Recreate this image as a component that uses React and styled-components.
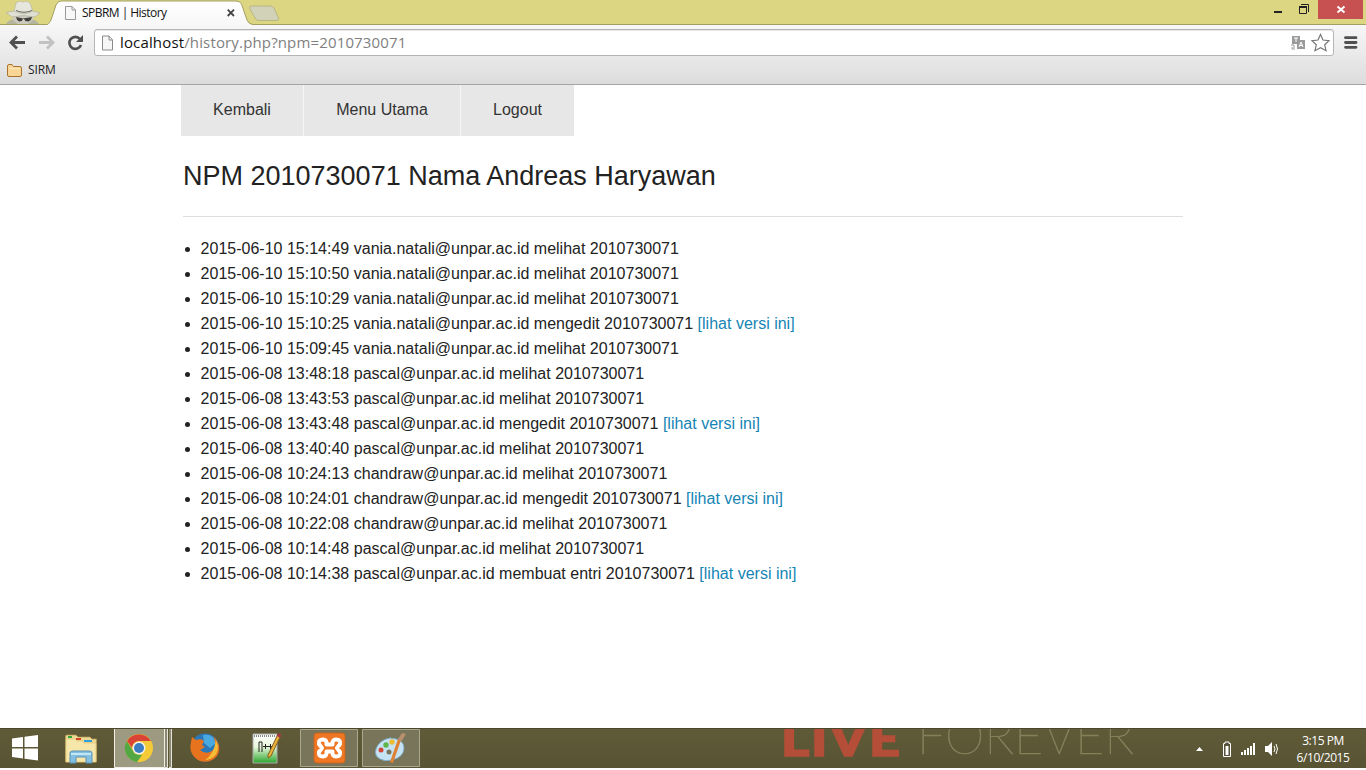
import React from 'react';
import styled, { createGlobalStyle } from 'styled-components';

const Global = createGlobalStyle`
  * { box-sizing: border-box; }
  body { margin: 0; background: #fff; font-family: "Liberation Sans", Arial, sans-serif; overflow: hidden; }
`;
const Screen = styled.div`
  width: 1366px; height: 768px; display: flex; flex-direction: column;
`;
const TitleBar = styled.header`
  height: 25px; background: #dcd683; display: flex; justify-content: space-between;
  border-bottom: 1px solid #a39f62; position: relative;
`;
const TabArt = styled.svg`
  position: absolute; left: 0; top: 0; width: 300px; height: 26px;
`;
const TabLabel = styled.div`
  position: relative; margin-left: 82px; padding-top: 5px; width: 160px;
  font: 12px/16px "Open Sans", sans-serif; color: #111; letter-spacing: -0.54px;
`;
const WindowButtons = styled.div`display: flex; height: 19px;`;
const WindowIcon = styled.svg`width: 126px; height: 24px; display: block;`;
const Toolbar = styled.div`
  height: 59px; background: linear-gradient(#f7f7f7, #dcdcdc);
  border-bottom: 1px solid #a4a4a4; display: flex; flex-direction: column;
  box-sizing: content-box;
`;
const NavRow = styled.div`display: flex; height: 35px; padding-top: 4px;`;
const NavIcons = styled.svg`width: 94px; height: 31px; display: block; flex: none;`;
const AddressBar = styled.div`
  width: 1240px; height: 27px; background: #fff; border: 1px solid #b5b5b5; border-radius: 3px;
  display: flex; align-items: center; box-shadow: inset 0 1px 0 #e8e8e8;
`;
const PageIcon = styled.svg`width: 25px; height: 25px; flex: none;`;
const Url = styled.div`
  flex: 1; font: 15px/24px "Open Sans", sans-serif; color: #808080; letter-spacing: 0.15px; padding-bottom: 2px;
  b { font-weight: 400; color: #111; }
`;
const AddressIcons = styled.svg`width: 46px; height: 25px; flex: none;`;
const MenuIcon = styled.svg`width: 32px; height: 31px; flex: none;`;
const Bookmarks = styled.div`
  display: flex; padding-left: 7px; gap: 6px; height: 21px; align-items: center;
  font: 12px/16px "Open Sans", sans-serif; color: #222;
  svg { width: 15px; height: 13px; }
  span { letter-spacing: -0.1px; padding-bottom: 1px; }
`;
const Page = styled.main`flex: 1; background: #fff; padding-left: 181px;`;
const Menu = styled.nav`display: flex; height: 51px;`;
const MenuItem = styled.a`
  width: ${p => p.$w}px; background: #e7e7e7; color: #333; font-size: 16px; line-height: 50px; text-align: center;
  border-right: ${p => (p.$last ? '0' : '1px solid #f5f5f5')};
`;
const Heading = styled.h3`
  margin: 20px 0 0 2px; font-size: 27px; line-height: 41px; font-weight: 400; color: #222; white-space: nowrap;
`;
const Rule = styled.hr`margin: 19px 0 19px 2px; width: 1000px; border: 0; border-top: 1px solid #ddd;`;
const List = styled.ul`margin: 0; padding: 0 0 0 4px; list-style: none;`;
const Entry = styled.li`
  height: 25px; font-size: 16px; line-height: 25px; color: #222; display: flex; white-space: pre; letter-spacing: 0.006px;
  &::before { content: ""; width: 5px; height: 5px; border-radius: 50%; background: #222; margin: 11px 10.6px 0 0; }
  a { color: #1585b5; }
`;
const Taskbar = styled.footer`
  height: 40px; flex: none; background: linear-gradient(#5f5b38, #585333); border-top: 1px solid #4b472f;
  display: flex; position: relative; overflow: hidden;
`;
const Wallpaper = styled.div`
  position: absolute; left: ${p => p.$x}px; top: ${p => p.$y}px; white-space: nowrap; transform-origin: 0 0;
  transform: scaleX(${p => p.$sx}); font: ${p => p.$w} ${p => p.$s}px/60px Lato, sans-serif; color: ${p => p.$c};
  letter-spacing: ${p => p.$ls}px; -webkit-text-stroke: ${p => p.$stroke}px ${p => p.$c};
`;
const TaskIcons = styled.svg`width: 430px; height: 40px; margin-top: -1px; flex: none;`;
const Tray = styled.svg`width: 100px; height: 40px; margin: -1px 0 0 auto;`;
const Clock = styled.div`
  width: 86px; text-align: center; color: #fff; font: 12px/17px "Open Sans", sans-serif; padding-top: 3px;
  letter-spacing: -0.45px;
`;

const entries = [
  ['2015-06-10 15:14:49 vania.natali@unpar.ac.id melihat 2010730071'],
  ['2015-06-10 15:10:50 vania.natali@unpar.ac.id melihat 2010730071'],
  ['2015-06-10 15:10:29 vania.natali@unpar.ac.id melihat 2010730071'],
  ['2015-06-10 15:10:25 vania.natali@unpar.ac.id mengedit 2010730071 ', 1],
  ['2015-06-10 15:09:45 vania.natali@unpar.ac.id melihat 2010730071'],
  ['2015-06-08 13:48:18 pascal@unpar.ac.id melihat 2010730071'],
  ['2015-06-08 13:43:53 pascal@unpar.ac.id melihat 2010730071'],
  ['2015-06-08 13:43:48 pascal@unpar.ac.id mengedit 2010730071 ', 1],
  ['2015-06-08 13:40:40 pascal@unpar.ac.id melihat 2010730071'],
  ['2015-06-08 10:24:13 chandraw@unpar.ac.id melihat 2010730071'],
  ['2015-06-08 10:24:01 chandraw@unpar.ac.id mengedit 2010730071 ', 1],
  ['2015-06-08 10:22:08 chandraw@unpar.ac.id melihat 2010730071'],
  ['2015-06-08 10:14:48 pascal@unpar.ac.id melihat 2010730071'],
  ['2015-06-08 10:14:38 pascal@unpar.ac.id membuat entri 2010730071 ', 1],
];

export default function App() {
  return (
    <>
      <Global />
      <Screen>
        <TitleBar>
          <TabArt viewBox="0 0 300 26">
            <defs>
              <linearGradient id="tab" x1="0" y1="0" x2="0" y2="1"><stop offset="0" stopColor="#fff" /><stop offset="1" stopColor="#f7f7f7" /></linearGradient>
            </defs>
            <path d="M45 26C49 24 50 22 51 20L56 5Q57.500 1 61 1H236Q240 1 241.500 4L247 20Q249 24.500 253 24.500V26Z" fill="url(#tab)" stroke="#a39f62" />
            <path d="M44 26H254V25H44Z" fill="#f7f7f7" />
            <path d="M251 6H270Q273 6 274 8L278.500 18Q279.500 20.500 276 20.500H259Q256 20.500 255 18L250 9Q248.500 6 251 6Z" fill="#d2d2b8" stroke="#b8b582" />
            <path d="M6 24Q8 20 14 19H31Q37 20 39 24Z" fill="#b5b49f" />
            <path d="M12 14H34L33 20L28 24H18L13 20Z" fill="#cbcabd" />
            <path d="M14 12L16 3Q19 0 23 2Q27 0 30 3L33 12Q24 16 14 12Z" fill="#e6e6dd" stroke="#b5b4a0" strokeWidth=".6" />
            <path d="M16 10.500Q24 14 32 10.500" fill="none" stroke="#66655c" />
            <path d="M6 12.500L14 11Q24 16 33 11L40 13L35 17Q24 14 12 17Z" fill="#e0dfd4" stroke="#a3a28e" strokeWidth=".5" />
            <path d="M16 17L23 18.500L32 17Q31 21 28 21.500Q25 21.500 24 19H23Q22 21.500 19.500 21.500Q17 21 16 17Z" fill="#3f3f3c" />
            <path d="M65.500 6.500H72L75.500 10V19.500H65.500ZM72 6.500V10H75.500" fill="#f8f8f8" stroke="#999" />
            <path d="M227.700 9.700L234 16M234 9.700L227.700 16" stroke="#444" strokeWidth="1.800" />
          </TabArt>
          <TabLabel>SPBRM | History</TabLabel>
          <WindowButtons>
            <WindowIcon viewBox="0 0 126 24">
              <path d="M34 12H42" stroke="#222" strokeWidth="2" />
              <path d="M59.500 6.500H66.500V13.500H59.500ZM61 4.500H68.500V12" fill="none" stroke="#222" />
              <path d="M59 6H67V8H59Z" fill="#222" />
              <path d="M78 0H123V19H78Z" fill="#c75050" />
              <path d="M97.500 6.500L104.500 12.500M104.500 6.500L97.500 12.500" stroke="#fff" strokeWidth="2" />
            </WindowIcon>
          </WindowButtons>
        </TitleBar>
        <Toolbar>
          <NavRow>
            <NavIcons viewBox="0 0 94 31">
              <path d="M25 13.500H11M17 7.500L11 13.500L17 19.500" fill="none" stroke="#505050" strokeWidth="2.800" />
              <path d="M39 13.500H53M47 7.500L53 13.500L47 19.500" fill="none" stroke="#c2c2c2" strokeWidth="2.800" />
              <path d="M80 10A6 6 0 1 0 81 16" fill="none" stroke="#505050" strokeWidth="2.600" />
              <path d="M83 6V13H76Z" fill="#505050" />
            </NavIcons>
            <AddressBar>
              <PageIcon viewBox="0 0 25 25">
                <path d="M7.500 6H14L17.500 10V20H7.500ZM14 6V10H17.500" fill="#f7f7f7" stroke="#8a8a8a" />
              </PageIcon>
              <Url><b>localhost</b>/history.php?npm=2010730071</Url>
              <AddressIcons viewBox="0 0 46 25">
                <path d="M5 6H13V14H5ZM10 10H18V19H10Z" fill="#9a9a9a" />
                <path d="M7 8H11M9 8V12M12 17L14 12L16 17M12.500 15.500H15.500" stroke="#fff" fill="none" />
                <path d="M4 15H7V18M5 17V19H8" stroke="#999" fill="none" />
                <path d="M33.500 4.500L36 10L42 10.700L37.700 14.800L39 20.700L33.500 17.700L28 20.700L29.300 14.800L25 10.700L31 10Z" fill="#fff" stroke="#777" strokeWidth="1.200" />
              </AddressIcons>
            </AddressBar>
            <MenuIcon viewBox="0 0 32 31"><path d="M11.500 8.700H22M11.500 13.500H22M11.500 18.300H22" stroke="#505050" strokeWidth="2.800" strokeLinecap="round" /></MenuIcon>
          </NavRow>
          <Bookmarks>
            <svg viewBox="0 0 15 13"><path d="M.5 2Q.5.5 2 .5H5L6.500 2.500H13Q14.500 2.500 14.500 4V11Q14.500 12.500 13 12.500H2Q.5 12.500.5 11Z" fill="#f9d596" stroke="#a8742f" /><path d="M2 4.500H13" stroke="#ffe9bd" /></svg>
            <span>SIRM</span>
          </Bookmarks>
        </Toolbar>
        <Page>
          <Menu>
            <MenuItem $w={123}>Kembali</MenuItem>
            <MenuItem $w={157}>Menu Utama</MenuItem>
            <MenuItem $w={113} $last>Logout</MenuItem>
          </Menu>
          <Heading>NPM 2010730071 Nama Andreas Haryawan</Heading>
          <Rule />
          <List>
            {entries.map(([text, link]) => (
              <Entry key={text}>{text}{link && <a>[lihat versi ini]</a>}</Entry>
            ))}
          </List>
        </Page>
        <Taskbar>
          <Wallpaper $x={781} $y={-21} $s={48} $w={900} $sx={1.13} $c="#b54e38" $ls={1.5} $stroke={1.5}>LIVE</Wallpaper>
          <Wallpaper $x={917} $y={-25} $s={52} $w={100} $sx={0.965} $c="#85805a" $ls={0} $stroke={0.7}>FOREVER</Wallpaper>
          <TaskIcons viewBox="0 0 430 40">
            <path d="M12 10.500L23 9V19H12ZM24.500 8.800L38 7V19H24.500ZM12 20.500H23V30.500L12 29ZM24.500 20.500H38V32.500L24.500 30.700Z" fill="#fff" />
            <path d="M65.500 8Q65.500 7 67 7H76L78 9H90L92 11H96.500V34H65.500Z" fill="#ecd893" stroke="#b39a55" strokeWidth=".7" />
            <path d="M68 8H72V10H68Z" fill="#31a83d" /><path d="M76 10H81V12H76Z" fill="#d44325" /><path d="M84 12H92V14H84Z" fill="#2fa0dc" />
            <path d="M66 11H75L77 13H82L84 15H96V34H66Z" fill="#f6e6a9" stroke="#dcc477" strokeWidth=".7" />
            <path d="M70 35V25Q70 23 73 23H89Q92 23 92 25V35H86V29H76V35Z" fill="#83bfe0" stroke="#5a94ba" /><path d="M71 26H91" stroke="#c3e6f5" strokeWidth="2" />
            <path d="M114.500.5H164.500V39.500H114.500Z" fill="#9d9a82" stroke="#efeee7" />
            <path d="M165 .5H167.500V39.500H165M169 .5H171.500V39.500H169" fill="#8b8870" stroke="#e5e4dc" />
            <circle cx="139" cy="20" r="14" fill="#f4ca36" /><path d="M127 13A14 14 0 0 1 151 13H139A7 7 0 0 0 132 20Z" fill="#d94436" /><path d="M126.700 13L135 26L142 27L137 34A14 14 0 0 1 126.700 13Z" fill="#54a843" />
            <circle cx="139" cy="20" r="6.500" fill="#f3f3ee" /><circle cx="139" cy="20" r="5" fill="#3c7cc3" />
            <circle cx="205" cy="19.500" r="14" fill="#2b78b9" /><path d="M203 7Q213 5 216 15L210 20L204 15Z" fill="#4aa9df" />
            <path d="M192 9L196 12Q201 10 204 13L202 17L205 19L200 22Q207 28 214 21Q217 15 213 8Q223 18 217 28Q210 36 200 33Q188 27 191 14Z" fill="#e8731f" /><path d="M218 18Q218 31 205 32Q214 26 216 12Z" fill="#f5bd35" />
            <defs><linearGradient id="npp" x1="0" y1="0" x2="0" y2="1"><stop stopColor="#fff" /><stop offset=".45" stopColor="#e7f7da" /><stop offset="1" stopColor="#29a52d" /></linearGradient></defs>
            <path d="M253 6H277V35H253Z" fill="url(#npp)" stroke="#aaa" /><path d="M254 8H276" stroke="#888" strokeDasharray="1 1" strokeWidth="2" />
            <path d="M259 24V14H262V24M263 18.500H268M265.500 16V21M268 18.500H273M270.500 16V21" stroke="#222" fill="none" />
            <path d="M278 6L281 7L271 28L268 30V27Z" fill="#e7b33b" stroke="#875d20" /><path d="M278 5L281 7L280 10L277 8Z" fill="#a83545" />
            <path d="M300.500 1.500H357.500V38.500H300.500ZM362.500 1.500H419.500V38.500H362.500Z" fill="#78755a" stroke="#aaa78f" />
            <rect x="314" y="5" width="31" height="30" rx="3" fill="#ef7622" stroke="#c86520" />
            <path d="M323 11.500Q318 11.500 319 16L322 20L319 24Q318 28.500 323 28.500Q327 28.500 326.500 23.500H332.500Q332 28.500 336 28.500Q341 28.500 340 24L337 20L340 16Q341 11.500 336 11.500Q332 11.500 332.500 16.500H326.500Q327 11.500 323 11.500Z" fill="none" stroke="#fff" strokeWidth="4" strokeLinejoin="round" />
            <path d="M390 10Q379 12 376 21Q374 28 380 31Q385 34 392 32Q404 29 404 20Q404 11 390 10Z" fill="#c6e3f3" stroke="#7fabc6" />
            <circle cx="389" cy="24" r="2.500" fill="#78755a" /><circle cx="381" cy="22" r="2.500" fill="#d44738" /><circle cx="386" cy="17" r="2.700" fill="#5fb54b" /><circle cx="392" cy="14" r="2.700" fill="#edbd35" />
            <path d="M401 12L393 35L390 34L398 11Z" fill="#df8132" /><path d="M398 11L402 5L406 6L401 14Z" fill="#b7916e" />
          </TaskIcons>
          <Tray viewBox="0 0 100 40">
            <path d="M16 23L19.500 19L23 23Z" fill="#fff" />
            <path d="M43.500 15.500H45V14H49V15.500H50.500V28.500H43.500Z" fill="#55513b" stroke="#fff" /><path d="M45.500 18H48.500V27H45.500Z" fill="#fff" />
            <path d="M61 24H63V27H61ZM64 22H66V27H64ZM67 20H69V27H67ZM70 18H72V27H70ZM73 15H75V27H73Z" fill="#fff" />
            <path d="M85 18H88L92 14V28L88 24H85Z" fill="#fff" /><path d="M94 18Q96 21 94 24M96 16Q99 21 96 26" stroke="#fff" fill="none" />
          </Tray>
          <Clock>3:15 PM<br />6/10/2015</Clock>
        </Taskbar>
      </Screen>
    </>
  );
}
